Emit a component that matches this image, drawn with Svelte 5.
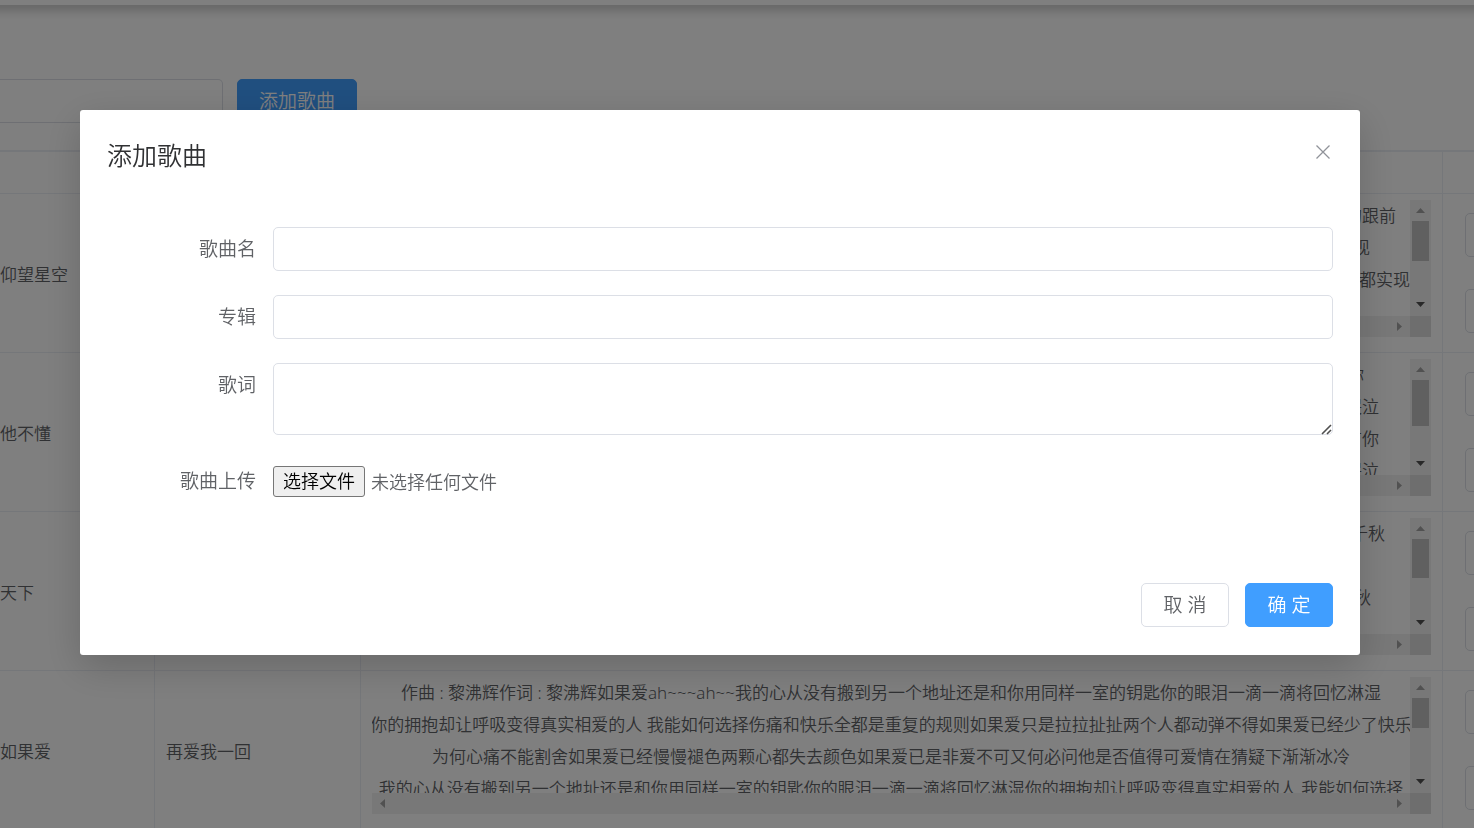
<script>
  const songs = [
    {
      name: '仰望星空',
      album: '',
      thumb: 40,
      lines: [
        { text: '的跟前', inset: 14 },
        { text: '现', inset: 40 },
        { text: '都实现', inset: 0 }
      ]
    },
    {
      name: '他不懂',
      album: '',
      thumb: 46,
      lines: [
        { text: '你', inset: 46 },
        { text: '哭泣', inset: 31 },
        { text: '有你', inset: 31 },
        { text: '哭泣', inset: 31 }
      ]
    },
    {
      name: '天下',
      album: '',
      thumb: 39,
      lines: [
        { text: '千秋', inset: 25 },
        { text: '', inset: 0 },
        { text: '秋', inset: 39 }
      ]
    },
    {
      name: '如果爱',
      album: '再爱我一回',
      thumb: 30,
      centered: true,
      lines: [
        { text: '作曲 : 黎沸辉作词 : 黎沸辉如果爱ah~~~ah~~我的心从没有搬到另一个地址还是和你用同样一室的钥匙你的眼泪一滴一滴将回忆淋湿' },
        { text: '你的拥抱却让呼吸变得真实相爱的人 我能如何选择伤痛和快乐全都是重复的规则如果爱只是拉拉扯扯两个人都动弹不得如果爱已经少了快乐' },
        { text: '为何心痛不能割舍如果爱已经慢慢褪色两颗心都失去颜色如果爱已是非爱不可又何必问他是否值得可爱情在猜疑下渐渐冰冷' },
        { text: '我的心从没有搬到另一个地址还是和你用同样一室的钥匙你的眼泪一滴一滴将回忆淋湿你的拥抱却让呼吸变得真实相爱的人 我能如何选择' }
      ]
    }
  ];
</script>

<div class="page">
  <header class="topbar"></header>
  <main>
    <div class="toolbar">
      <input class="search" type="text" aria-label="搜索" />
      <button class="btn primary add" type="button">添加歌曲</button>
    </div>
    <table>
      <colgroup>
        <col class="c-name" /><col class="c-album" /><col /><col class="c-ops" />
      </colgroup>
      <thead>
        <tr><th></th><th></th><th></th><th></th></tr>
      </thead>
      <tbody>
        {#each songs as song}
          <tr>
            <td class="name">{song.name}</td>
            <td class="album">{song.album}</td>
            <td class="lyric-cell">
              <div class="lyrics">
                <div class="text" class:centered={song.centered}>
                  {#each song.lines as line}
                    <p style:padding-right={line.inset ? `${line.inset}px` : null}>{line.text}</p>
                  {/each}
                </div>
                <div class="vbar">
                  <svg viewBox="0 0 21 21"><path d="M6 13 L10.500 8 L15 13 Z" fill="#a3a3a3" /></svg>
                  <div class="thumb" style:height={`${song.thumb}px`}></div>
                  <svg class="down" viewBox="0 0 21 21"><path d="M6 7 L15 7 L10.500 12 Z" fill="#505050" /></svg>
                </div>
                <div class="hbar">
                  <svg viewBox="0 0 21 21"><path d="M13 6 L8 10.500 L13 15 Z" fill="#a3a3a3" /></svg>
                  <svg viewBox="0 0 21 21"><path d="M8 6 L13 10.500 L8 15 Z" fill="#a3a3a3" /></svg>
                </div>
                <div class="corner"></div>
              </div>
            </td>
            <td class="ops">
              <div>
                <button class="btn" type="button" aria-label="编辑"></button>
                <button class="btn" type="button" aria-label="删除"></button>
              </div>
            </td>
          </tr>
        {/each}
      </tbody>
    </table>
  </main>

  <div class="overlay">
    <div class="dialog" role="dialog" aria-labelledby="dialog-title">
      <div class="dialog-head">
        <h2 id="dialog-title">添加歌曲</h2>
        <button class="close" type="button" aria-label="关闭">
          <svg viewBox="0 0 16 16"><path d="M1.500 1.500 L14.500 14.500 M14.500 1.500 L1.500 14.500" /></svg>
        </button>
      </div>
      <form>
        <label for="song-name">歌曲名</label>
        <input id="song-name" type="text" />
        <label for="song-album">专辑</label>
        <input id="song-album" type="text" />
        <label for="song-lyric">歌词</label>
        <div class="area">
          <textarea id="song-lyric"></textarea>
          <svg viewBox="0 0 12 12"><path d="M1 11 L10 2 M6 11 L10 7" /></svg>
        </div>
        <label for="song-file">歌曲上传</label>
        <div class="file">
          <input id="song-file" type="file" />
          <label class="pick" for="song-file">选择文件</label>
          <span>未选择任何文件</span>
        </div>
      </form>
      <div class="dialog-foot">
        <button class="btn" type="button">取 消</button>
        <button class="btn primary" type="button">确 定</button>
      </div>
    </div>
  </div>
</div>

<style>
  :global(body) {
    margin: 0;
    background: #fff;
  }
  .page,
  .page * {
    box-sizing: border-box;
  }
  .page {
    height: 100vh;
    overflow: hidden;
    font-family: 'Noto Sans', 'Noto Sans CJK SC', sans-serif;
    font-weight: 350;
    font-size: 17px;
    color: #606266;
  }
  input,
  textarea,
  button {
    font: inherit;
    color: inherit;
  }
  .topbar {
    height: 5px;
    margin: 0 -20px;
    box-shadow: 0 2px 12px rgba(0, 0, 0, 0.5);
  }
  .toolbar {
    display: flex;
    gap: 14px;
    padding-top: 74px;
    margin-bottom: 27px;
  }
  .search {
    width: 223px;
    height: 44px;
    border: 1px solid #dcdfe6;
    border-left: 0;
    border-radius: 0 5px 5px 0;
    background: #fff;
  }
  .btn {
    height: 44px;
    min-width: 88px;
    padding: 0 20px;
    border: 1px solid #dcdfe6;
    border-radius: 5px;
    background: #fff;
    font-size: 19px;
    line-height: 1;
    white-space: nowrap;
  }
  .btn.primary {
    border-color: #409eff;
    background: #409eff;
    color: #fff;
  }
  .add {
    width: 120px;
  }

  table {
    width: 100%;
    table-layout: fixed;
    border-collapse: separate;
    border-spacing: 0;
    border-top: 2px solid #ebeef5;
  }
  .c-name {
    width: 155px;
  }
  .c-album {
    width: 206px;
  }
  .c-ops {
    width: 31px;
  }
  th,
  td {
    padding: 0;
    border-right: 1px solid #ebeef5;
    border-bottom: 1px solid #ebeef5;
    overflow: hidden;
  }
  th:last-child,
  td:last-child {
    border-right: 0;
  }
  th {
    height: 42px;
  }
  td {
    height: 159px;
  }
  .album {
    padding-left: 11px;
  }
  .lyric-cell {
    padding: 6px 11px 14px;
    vertical-align: top;
  }
  .lyrics {
    display: grid;
    grid-template-columns: minmax(0, 1fr) 21px;
    grid-template-rows: 116px 21px;
  }
  .text {
    overflow: hidden;
    text-align: right;
    white-space: nowrap;
  }
  .text.centered {
    text-align: center;
  }
  p {
    margin: 0;
    height: 32px;
    line-height: 31px;
  }
  .centered p {
    margin: 0 -2px;
  }
  .lyrics svg {
    display: block;
    width: 21px;
    height: 21px;
  }
  .vbar,
  .hbar {
    display: flex;
    background: #f1f1f1;
  }
  .vbar {
    flex-direction: column;
    align-items: center;
  }
  .hbar {
    justify-content: space-between;
  }
  .thumb {
    width: 17px;
    background: #c1c1c1;
  }
  .down {
    margin-top: auto;
  }
  .corner {
    background: #dcdcdc;
  }
  .ops {
    vertical-align: top;
  }
  .ops div {
    display: flex;
    flex-direction: column;
    align-items: flex-start;
    gap: 32px;
    padding: 19px 0 0 22px;
  }

  .overlay {
    position: fixed;
    inset: 0;
    padding: 110px 114px 0 80px;
    background: rgba(0, 0, 0, 0.5);
  }
  .dialog {
    padding: 27px 27px 28px;
    border-radius: 3px;
    background: #fff;
    box-shadow: 0 12px 38px rgba(0, 0, 0, 0.18);
    font-size: 19px;
  }
  .dialog-head {
    display: flex;
    justify-content: space-between;
    align-items: flex-start;
  }
  h2 {
    margin: 0;
    font-size: 25px;
    font-weight: inherit;
    line-height: 36px;
    color: #303133;
  }
  .close {
    display: flex;
    align-items: center;
    justify-content: center;
    width: 20px;
    height: 30px;
    padding: 0;
    border: 0;
    background: none;
  }
  .close svg {
    width: 16px;
    height: 16px;
    fill: none;
    stroke: #909399;
    stroke-width: 1.3;
  }
  form {
    display: grid;
    grid-template-columns: 149px minmax(0, 1fr);
    gap: 24px 17px;
    margin: 54px 0 80px;
  }
  form > label {
    text-align: right;
    line-height: 44px;
  }
  form > input,
  textarea {
    display: block;
    width: 100%;
    height: 44px;
    padding: 0 20px;
    border: 1px solid #dcdfe6;
    border-radius: 5px;
    background: #fff;
  }
  textarea {
    height: 72px;
    resize: vertical;
  }
  textarea::-webkit-resizer {
    background: transparent;
  }
  .area {
    position: relative;
  }
  .area svg {
    position: absolute;
    right: 0;
    bottom: 0;
    width: 12px;
    height: 12px;
    fill: none;
    stroke: #505050;
    stroke-width: 1.6;
    pointer-events: none;
  }
  .file {
    position: relative;
    display: flex;
    align-items: center;
    gap: 6px;
    height: 44px;
    font-size: 18px;
  }
  .file input {
    position: absolute;
    width: 1px;
    height: 1px;
    opacity: 0;
  }
  .pick {
    height: 31px;
    padding: 0 9px;
    border: 1px solid #767676;
    border-radius: 3px;
    background: #efefef;
    color: #000;
    line-height: 29px;
  }
  .dialog-foot {
    display: flex;
    justify-content: flex-end;
    gap: 16px;
  }
</style>
